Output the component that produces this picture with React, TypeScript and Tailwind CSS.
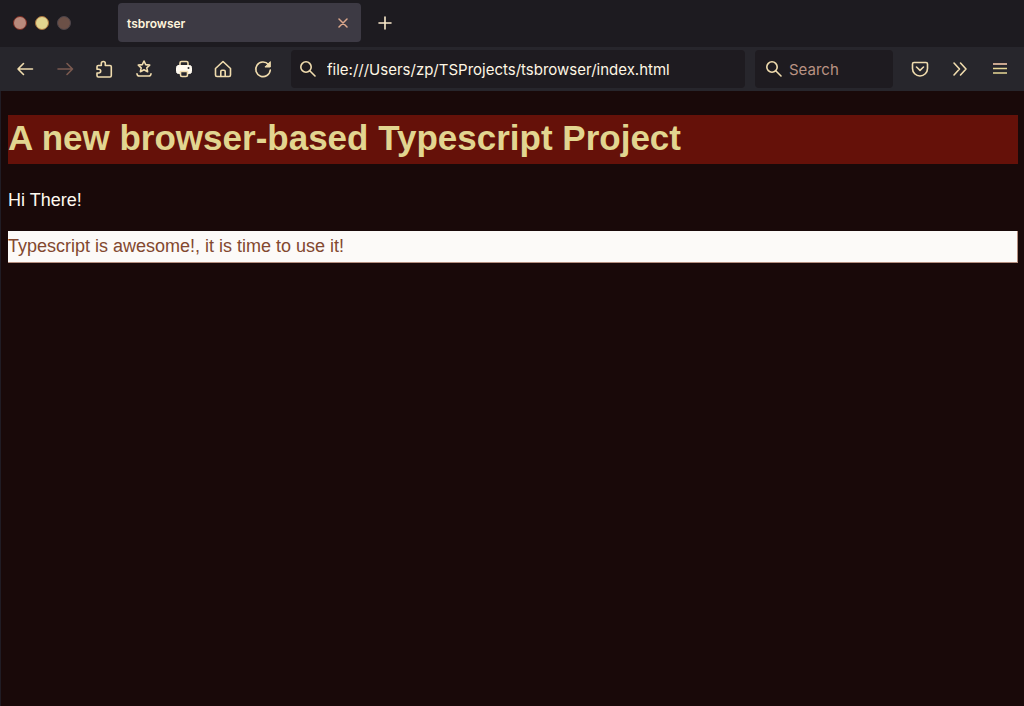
import type { ReactNode } from "react";

const cream = "#f0dcae";

function Icon({ children, label, dim = false }: { children: ReactNode; label: string; dim?: boolean }) {
  return (
    <button type="button" aria-label={label} className="flex size-6 shrink-0 items-center justify-center">
      <svg
        width="20"
        height="20"
        viewBox="0 0 20 20"
        fill="none"
        stroke={dim ? "#7a5a50" : cream}
        strokeWidth="1.6"
        strokeLinecap="round"
        strokeLinejoin="round"
      >
        {children}
      </svg>
    </button>
  );
}

function SearchIcon() {
  return (
    <svg width="18" height="18" viewBox="0 0 18 18" fill="none" stroke={cream} strokeWidth="1.6" strokeLinecap="round" className="shrink-0" aria-hidden="true">
      <circle cx="7" cy="7" r="5.2" />
      <path d="M11 11l5 5" />
    </svg>
  );
}

function TabStrip() {
  return (
    <div className="flex h-[47px] bg-[#1d1b20] pt-[3px]">
      <div className="flex h-10 w-[118px] shrink-0 items-center gap-2 pl-[13px]">
        <button type="button" aria-label="Close window" className="size-3.5 rounded-full border border-[#7a2a20] bg-[#b98a7c]" />
        <button type="button" aria-label="Minimize window" className="size-3.5 rounded-full border border-[#a8703c] bg-[#e2d590]" />
        <button type="button" aria-label="Zoom window" className="size-3.5 rounded-full border border-[#4c444a] bg-[#6b5047]" />
      </div>
      <div className="flex h-[39px] w-[243px] items-center justify-between rounded bg-[#3d3a44] pr-2 pl-[9px]">
        <span className="pt-0.5 text-xs font-semibold text-[#fff4dc]">tsbrowser</span>
        <button type="button" aria-label="Close tab" className="flex size-5 items-center justify-center">
          <svg width="10" height="10" viewBox="0 0 10 10" stroke="#dda88c" strokeWidth="1.5" strokeLinecap="round">
            <path d="M1 1l8 8M9 1l-8 8" />
          </svg>
        </button>
      </div>
      <button type="button" aria-label="New tab" className="ml-3 flex h-10 w-6 items-center justify-center">
        <svg width="14" height="14" viewBox="0 0 14 14" stroke="#fbeacb" strokeWidth="1.6" strokeLinecap="round">
          <path d="M7 1v12M1 7h12" />
        </svg>
      </button>
    </div>
  );
}

function Toolbar() {
  return (
    <div className="flex h-11 items-center bg-[#27262c] pr-3 pl-[13px]">
      <div className="flex w-[262px] shrink-0 justify-between">
        <Icon label="Back">
          <path d="M17.500 10H3M8.500 4.500L3 10l5.500 5.500" />
        </Icon>
        <Icon label="Forward" dim>
          <path d="M3 10h14.500M12 4.500l5.500 5.500-5.500 5.500" />
        </Icon>
        <Icon label="Extensions">
          <path d="M3 9V7.800q0-1.300 1.300-1.300h3V4.500a2 2 0 0 1 4 0v2H16q1.300 0 1.300 1.300v8.700q0 1.500-1.300 1.500H4.300q-1.300 0-1.300-1.500V14h1.800a1.900 1.900 0 0 0 0-3.800H3z" />
        </Icon>
        <Icon label="Bookmarks">
          <path d="M10 2l1.700 3.600 4 .5-2.900 2.700.8 3.900-3.600-1.900-3.600 1.900.8-3.900-2.900-2.700 4-.5z" />
          <path d="M3 14.800q.3 2.200 2.500 2.200h9q2.200 0 2.500-2.200" />
        </Icon>
        <Icon label="Print">
          <path d="M6 7V4q0-1.500 1.500-1.500h5Q14 2.500 14 4v3" />
          <path fill="#fffaf0" stroke="#fffaf0" strokeWidth="1" d="M4.500 6.500h11q2 0 2 2v4q0 2-2 2h-11q-2 0-2-2v-4q0-2 2-2z" />
          <path fill="#27262c" d="M6.500 12.500h7V16q0 1.500-1.500 1.500H8q-1.500 0-1.500-1.500z" />
          <circle cx="14.500" cy="9" r="1" fill="#27262c" stroke="none" />
        </Icon>
        <Icon label="Home">
          <path d="M2.500 9.500L10 2.500l7.500 7V16q0 1.500-1.500 1.500H4q-1.500 0-1.500-1.500z" />
          <path d="M7.800 17v-4.500q0-1.200 1.200-1.200h2q1.200 0 1.200 1.200V17" />
        </Icon>
        <Icon label="Reload">
          <path d="M15.500 5.500A7.300 7.300 0 1 0 17.300 11" />
          <path fill={cream} strokeWidth="1" d="M17.300 3v5h-5z" />
        </Icon>
      </div>
      <label className="ml-4 flex h-[38px] min-w-0 flex-1 items-center gap-2.5 rounded bg-[#1e1b20] px-2">
        <SearchIcon />
        <input
          aria-label="Address"
          defaultValue="file:///Users/zp/TSProjects/tsbrowser/index.html"
          className="min-w-0 flex-1 bg-transparent pt-0.5 text-[15px] text-[#fff6e4] outline-none"
        />
      </label>
      <label className="ml-2.5 flex h-[38px] w-[138px] shrink-0 items-center gap-1.5 rounded bg-[#1e1b20] px-2.5">
        <SearchIcon />
        <input
          aria-label="Search"
          placeholder="Search"
          className="min-w-0 flex-1 bg-transparent pt-0.5 text-[15px] outline-none placeholder:text-[#b99283]"
        />
      </label>
      <div className="ml-[15px] flex shrink-0 gap-4">
        <Icon label="Save to Pocket">
          <path d="M4 3.500h12q1.500 0 1.500 1.500v4.500a7.500 7.500 0 0 1-15 0V5q0-1.500 1.500-1.500z" />
          <path d="M6.500 8l3.500 3.300L13.500 8" />
        </Icon>
        <Icon label="More tools">
          <path d="M4 4l5.500 6L4 16M10.500 4L16 10l-5.500 6" />
        </Icon>
        <Icon label="Menu">
          <path stroke="#c9a68f" strokeWidth="2" strokeLinecap="butt" d="M3 5h14" />
          <path stroke="#e8d795" strokeLinecap="butt" d="M3 9.500h14M3 14h14" />
        </Icon>
      </div>
    </div>
  );
}

export default function App() {
  return (
    <div className="flex min-h-screen flex-col bg-[#190909] font-['Inter','Liberation_Sans',sans-serif]">
      <header>
        <TabStrip />
        <Toolbar />
      </header>
      <main className="flex-1 border-l border-[#201c24] pt-6 pr-1.5 pl-[7px] font-['Liberation_Sans',Arial,sans-serif] text-lg">
        <h1 className="h-[49px] bg-[#651109] text-[35px] leading-[45px] font-bold text-[#e2d590]">
          A new browser-based Typescript Project
        </h1>
        <p className="mt-[22px] leading-7 text-[#fffaf0]">Hi There!</p>
        <p className="mt-[17px] h-8 border-r border-b border-[#b58f80] bg-[#fcfaf8] leading-[30px] text-[#83482f]">
          Typescript is awesome!, it is time to use it!
        </p>
      </main>
    </div>
  );
}
